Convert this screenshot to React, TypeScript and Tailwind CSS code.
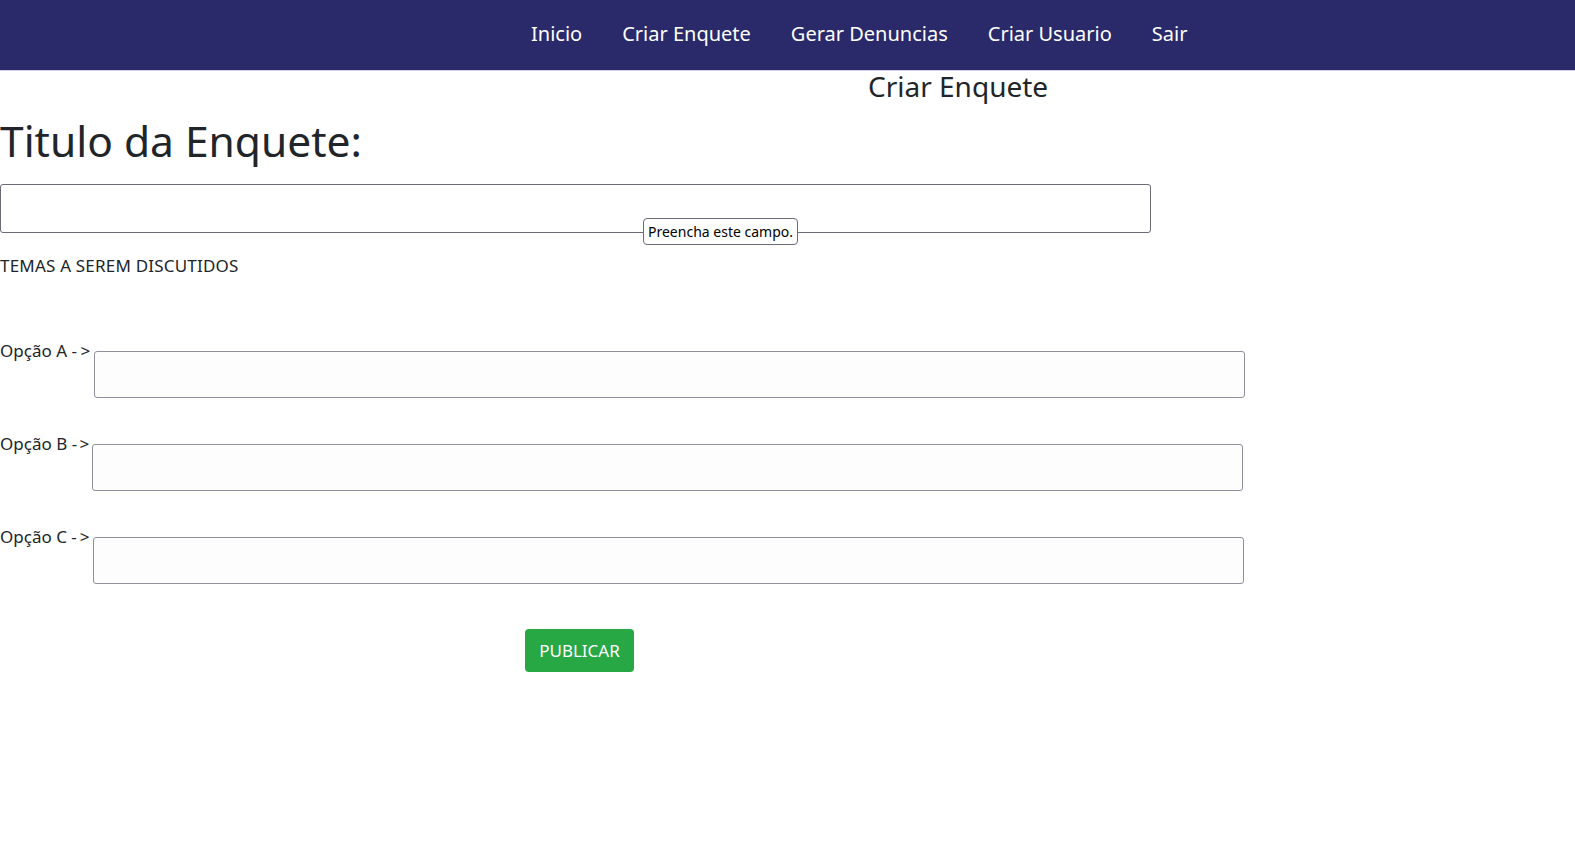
import React from "react";

export default function App() {
  const font = { fontFamily: '"Noto Sans", "Open Sans", sans-serif' };
  return (
    <div className="min-h-[855px] bg-white text-[#212529]" style={font}>
      <nav className="h-[71px] bg-[#2a2a6a] flex items-center pl-[531px] gap-[40px] text-[20px] text-white border-b border-[#d0d0e0]">
        <span className="-mt-[2px]">Inicio</span>
        <span className="-mt-[2px]">Criar Enquete</span>
        <span className="-mt-[2px]">Gerar Denuncias</span>
        <span className="-mt-[2px]">Criar Usuario</span>
        <span className="-mt-[2px]">Sair</span>
      </nav>
      <h2 className="pl-[868px] text-[28px] leading-[32px] mt-[-1px]">Criar Enquete</h2>
      <h1 className="text-[42.5px] leading-[50px] mt-[14px]">Titulo da Enquete:</h1>
      <div className="relative mt-[18px] h-[49px]">
        <input
          type="text"
          className="w-[1151px] h-[49px] border border-[#6a6a78] rounded-[3px] outline-none"
        />
        <div className="absolute left-[643px] top-[34px] h-[27px] px-[4px] flex items-center bg-white border border-[#6a6a78] rounded-[4px] text-[14px] text-black">
          Preencha este campo.
        </div>
      </div>
      <p className="text-[17px] leading-[24px] mt-[21px] tracking-[0.2px]">TEMAS A SEREM DISCUTIDOS</p>
      <div className="mt-[62px] flex flex-col gap-[35px]">
        {[
          ["A", "tracking-[3.5px]"],
          ["B", "tracking-[2.5px]"],
          ["C", "tracking-[3px]"],
        ].map(([l, t]) => (
          <div key={l} className="flex items-start">
            <span className="text-[17px] leading-[22px] whitespace-pre">
              Opção {l} <span className={t}>-&gt;</span>
            </span>
            <input
              type="text"
              className="mt-[11px] w-[1151px] h-[47px] border border-[#8f8f9d] bg-[#fdfdfd] rounded-[3px] outline-none"
            />
          </div>
        ))}
      </div>
      <button className="ml-[525px] mt-[45px] w-[109px] h-[43px] bg-[#28a745] text-white text-[17px] rounded-[4px]">
        PUBLICAR
      </button>
    </div>
  );
}
